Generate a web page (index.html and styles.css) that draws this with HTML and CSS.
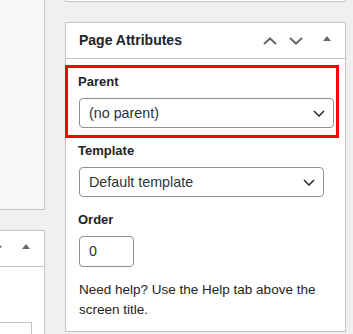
FILE: index.html
```html
<!DOCTYPE html>
<html lang="en">
<head>
  <meta charset="UTF-8">
  <title>Page Attributes</title>
  <link rel="stylesheet" href="styles.css">
</head>
<body>
  <div class="wrap">
    <div class="main-col">
      <div class="status-bar"></div>
      <div class="postbox wide-box">
        <div class="postbox-header">
          <h2></h2>
          <div class="handles">
            <button class="handle"><svg width="14" height="8" viewBox="0 0 14 8"><path d="M1 7l6-5.6L13 7" /></svg></button>
            <button class="handle"><svg width="14" height="8" viewBox="0 0 14 8"><path d="M1 1l6 5.6L13 1" /></svg></button>
            <button class="toggle"><svg width="8" height="5" viewBox="0 0 8 5"><path class="solid" d="M4 0L8 5H0z" /></svg></button>
          </div>
        </div>
        <div class="inside">
          <div class="field-stub"></div>
        </div>
      </div>
    </div>

    <div class="side-col">
      <div class="postbox top-box"></div>

      <div class="postbox attributes">
        <div class="postbox-header">
          <h2>Page Attributes</h2>
          <div class="handles">
            <button class="handle"><svg width="14" height="8" viewBox="0 0 14 8"><path d="M1 7l6-5.6L13 7" /></svg></button>
            <button class="handle"><svg width="14" height="8" viewBox="0 0 14 8"><path d="M1 1l6 5.6L13 1" /></svg></button>
            <button class="toggle"><svg width="8" height="5" viewBox="0 0 8 5"><path class="solid" d="M4 0L8 5H0z" /></svg></button>
          </div>
        </div>
        <div class="inside">
          <p class="label">Parent</p>
          <div class="select select-full">
            <span>(no parent)</span>
            <svg width="12" height="7" viewBox="0 0 12 7"><path d="M1 1l5 5 5-5" /></svg>
          </div>

          <p class="label">Template</p>
          <div class="select select-template">
            <span>Default template</span>
            <svg width="12" height="7" viewBox="0 0 12 7"><path d="M1 1l5 5 5-5" /></svg>
          </div>

          <p class="label">Order</p>
          <div class="order-input">0</div>

          <p class="help">Need help? Use the Help tab above the screen title.</p>
        </div>

        <!-- highlight around the parent field -->
        <div class="highlight"></div>
      </div>
    </div>
  </div>
</body>
</html>
```

FILE: styles.css
```css
* {
  box-sizing: border-box;
}

body {
  margin: 0;
  background: #f0f0f1;
  font-family: "Liberation Sans", Arial, sans-serif;
  color: #1d2327;
  overflow: hidden;
}

.wrap {
  display: flex;
  gap: 20px;
  height: 334px;
  overflow: hidden;
}

.main-col {
  width: 45px;
  flex-shrink: 0;
  overflow: hidden;
}

.status-bar {
  width: 300px;
  margin-left: -255px;
  height: 210px;
  background: #f6f7f7;
  border-right: 1px solid #c3c4c7;
  border-bottom: 1px solid #c3c4c7;
}

.postbox {
  background: #fff;
  border: 1px solid #c3c4c7;
}

.wide-box {
  width: 300px;
  margin-left: -255px;
  margin-top: 20px;
  height: 120px;
}

.field-stub {
  margin-top: 55px;
  margin-left: 200px;
  width: 74px;
  height: 40px;
  border: 1px solid #c3c4c7;
}

.side-col {
  width: 281px;
  flex-shrink: 0;
}

.top-box {
  height: 2px;
  border-top: none;
  margin-bottom: 20px;
}

.attributes {
  position: relative;
}

.postbox-header {
  display: flex;
  align-items: center;
  justify-content: space-between;
  height: 36px;
  border-bottom: 1px solid #c3c4c7;
}

.postbox-header h2 {
  margin: 0;
  padding: 0 0 0 13px;
  font-size: 14px;
  font-weight: bold;
  line-height: 1.4;
}

.handles {
  display: flex;
  height: 35px;
}

.handles button {
  display: flex;
  align-items: center;
  justify-content: center;
  height: 35px;
  padding: 0;
  border: none;
  background: none;
}

.handle {
  width: 26px;
}

.toggle {
  width: 36px;
  padding-bottom: 4px !important;
}

.handles path {
  fill: none;
  stroke: #646970;
  stroke-width: 2;
}

.handles path.solid {
  fill: #646970;
  stroke: none;
}

.inside {
  padding: 0 12px 11px 12px;
}

.label {
  margin: 13px 0 6px 0;
  font-size: 13px;
  font-weight: bold;
  line-height: 20px;
}

.select {
  display: flex;
  align-items: center;
  justify-content: space-between;
  height: 30px;
  padding: 0 8px 0 9px;
  border: 1px solid #8c8f94;
  border-radius: 4px;
  font-size: 14.3px;
  color: #2c3338;
}

.select-full {
  width: 255px;
  margin-left: 1px;
}

.select-template {
  width: 245px;
  margin-left: 1px;
}

.select path {
  fill: none;
  stroke: #2c3338;
  stroke-width: 1.6;
}

.order-input {
  width: 55px;
  height: 31px;
  margin-left: 1px;
  padding: 0 9px;
  border: 1px solid #8c8f94;
  border-radius: 4px;
  font-size: 14.3px;
  line-height: 29px;
  color: #2c3338;
}

.help {
  margin: 13px 0 0 1px;
  font-size: 13.5px;
  line-height: 20px;
}

.highlight {
  position: absolute;
  left: -1px;
  top: 42px;
  width: 274px;
  height: 73px;
  border: 3px solid #ff0000;
}
```
